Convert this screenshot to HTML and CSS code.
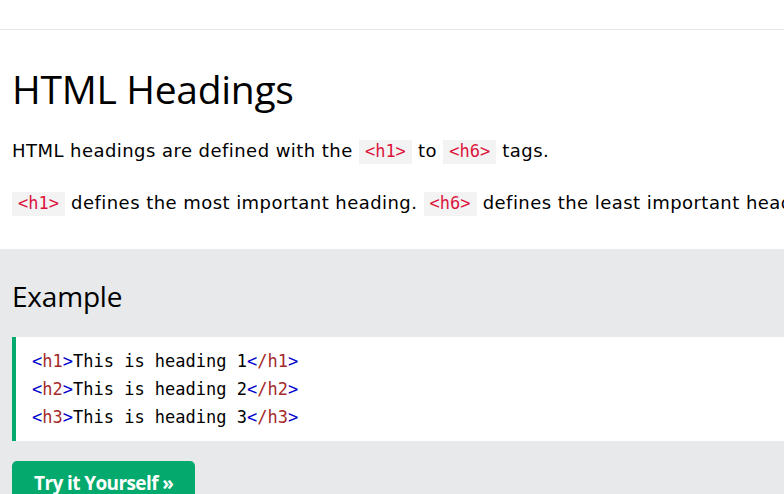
FILE: index.html
```html
<!DOCTYPE html>
<html>
<head>
<meta charset="utf-8">
<link rel="stylesheet" href="styles.css">
</head>
<body>
<div class="topbar"></div>
<div class="main">
  <h1 class="title">HTML Headings</h1>
  <p class="text">HTML headings are defined with the <code class="tag">&lt;h1&gt;</code> to <code class="tag">&lt;h6&gt;</code> tags.</p>
  <p class="text"><code class="tag">&lt;h1&gt;</code> defines the most important heading. <code class="tag">&lt;h6&gt;</code> defines the least important heading.</p>
</div>
<div class="example">
  <h2 class="example-title">Example</h2>
  <div class="codebox">
    <div class="line"><span class="br">&lt;</span><span class="tn">h1</span><span class="br">&gt;</span>This is heading 1<span class="br">&lt;</span><span class="tn">/h1</span><span class="br">&gt;</span></div>
    <div class="line"><span class="br">&lt;</span><span class="tn">h2</span><span class="br">&gt;</span>This is heading 2<span class="br">&lt;</span><span class="tn">/h2</span><span class="br">&gt;</span></div>
    <div class="line"><span class="br">&lt;</span><span class="tn">h3</span><span class="br">&gt;</span>This is heading 3<span class="br">&lt;</span><span class="tn">/h3</span><span class="br">&gt;</span></div>
  </div>
  <a class="btn" href="#">Try it Yourself &raquo;</a>
</div>
</body>
</html>
```
FILE: styles.css
```css
html, body {
  margin: 0;
  padding: 0;
  background: #fff;
  color: #000;
  font-family: "Open Sans", "Noto Sans", sans-serif;
  overflow: hidden;
  width: 784px;
  height: 494px;
}
.topbar {
  height: 29px;
  border-bottom: 1px solid #e8e8e8;
}
.main {
  padding: 0 12px;
  white-space: nowrap;
  height: 219px;
}
.title {
  margin: 0;
  padding-top: 34px;
  font-size: 39px;
  font-weight: 400;
  line-height: 50px;
  letter-spacing: -0.3px;
}
.text {
  margin: 0;
  font-family: "DejaVu Sans", "Verdana", sans-serif;
  font-size: 18px;
  letter-spacing: 0.45px;
  line-height: 30px;
  margin-top: 22px;
}
.text + .text {
  margin-top: 22px;
}
.tag {
  font-family: "DejaVu Sans Mono", "Liberation Mono", monospace;
  font-size: 17px;
  letter-spacing: 0;
  color: #dc143c;
  background: #f3f3f3;
  padding: 1px 6px 3px;
}
.example {
  background: #e7e9eb;
  padding: 22px 0 20px 12px;
  height: 300px;
}
.example-title {
  margin: 0;
  font-size: 28px;
  font-weight: 400;
  line-height: 50px;
  letter-spacing: -0.2px;
}
.codebox {
  margin-top: 16px;
  background: #fff;
  border-left: 4px solid #04aa6d;
  padding: 10px 16px;
  font-family: "DejaVu Sans Mono", "Liberation Mono", monospace;
  font-size: 17px;
  line-height: 28px;
  color: #000;
  white-space: nowrap;
}
.br { color: #0000cd; }
.tn { color: #a52a2a; }
.btn {
  display: inline-block;
  margin-top: 20px;
  background: #04aa6d;
  color: #fff;
  text-decoration: none;
  font-family: "Open Sans", sans-serif;
  font-weight: 700;
  font-size: 19px;
  line-height: 44px;
  padding: 0 22px;
  border-radius: 5px;
  letter-spacing: -0.6px;
}
```
